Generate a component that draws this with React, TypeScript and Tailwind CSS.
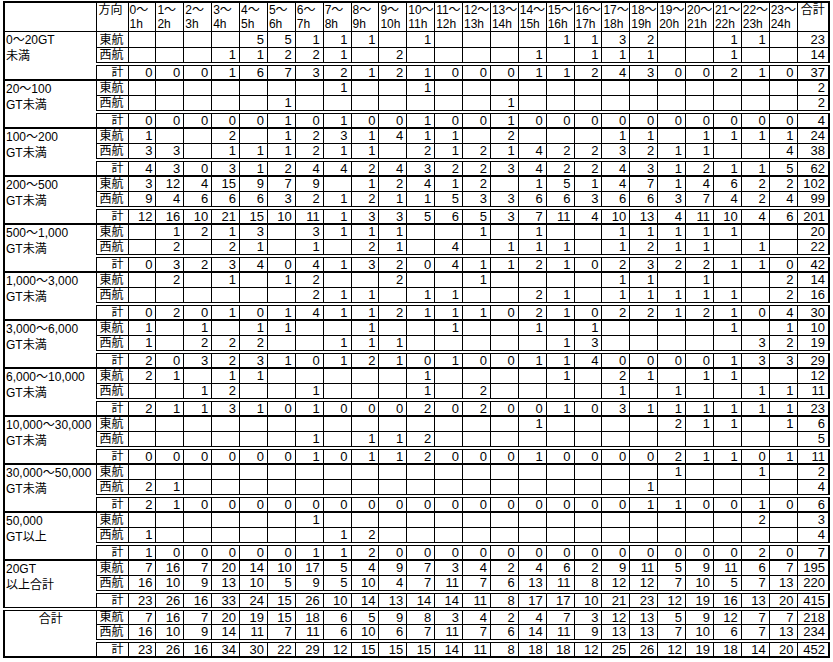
import React from "react";

// Hourly vessel traffic by tonnage class — "_" marks an empty cell, last value is the row total
type Group = {
  label: [string, string];
  center?: boolean;
  east: string;
  west: string;
  total: string;
};

const GROUPS: Group[] = [
  {
    label: ["0～20GT", "未満"],
    east:  "_ _ _ _ 5 5 1 1 1 _ 1 _ _ _ _ 1 1 3 2 _ _ 1 1 _ 23",
    west:  "_ _ _ 1 1 2 2 1 _ 2 _ _ _ _ 1 _ 1 1 1 _ _ 1 _ _ 14",
    total: "0 0 0 1 6 7 3 2 1 2 1 0 0 0 1 1 2 4 3 0 0 2 1 0 37",
  },
  {
    label: ["20～100", "GT未満"],
    east:  "_ _ _ _ _ _ _ 1 _ _ 1 _ _ _ _ _ _ _ _ _ _ _ _ _ 2",
    west:  "_ _ _ _ _ 1 _ _ _ _ _ _ _ 1 _ _ _ _ _ _ _ _ _ _ 2",
    total: "0 0 0 0 0 1 0 1 0 0 1 0 0 1 0 0 0 0 0 0 0 0 0 0 4",
  },
  {
    label: ["100～200", "GT未満"],
    east:  "1 _ _ 2 _ 1 2 3 1 4 1 1 _ 2 _ _ _ 1 1 _ 1 1 1 1 24",
    west:  "3 3 _ 1 1 1 2 1 1 _ 2 1 2 1 4 2 2 3 2 1 1 _ _ 4 38",
    total: "4 3 0 3 1 2 4 4 2 4 3 2 2 3 4 2 2 4 3 1 2 1 1 5 62",
  },
  {
    label: ["200～500", "GT未満"],
    east:  "3 12 4 15 9 7 9 _ 1 2 4 1 2 _ 1 5 1 4 7 1 4 6 2 2 102",
    west:  "9 4 6 6 6 3 2 1 2 1 1 5 3 3 6 6 3 6 6 3 7 4 2 4 99",
    total: "12 16 10 21 15 10 11 1 3 3 5 6 5 3 7 11 4 10 13 4 11 10 4 6 201",
  },
  {
    label: ["500～1,000", "GT未満"],
    east:  "_ 1 2 1 3 _ 3 1 1 1 _ _ 1 _ 1 _ _ 1 1 1 1 1 _ _ 20",
    west:  "_ 2 _ 2 1 _ 1 _ 2 1 _ 4 _ 1 1 1 _ 1 2 1 1 _ 1 _ 22",
    total: "0 3 2 3 4 0 4 1 3 2 0 4 1 1 2 1 0 2 3 2 2 1 1 0 42",
  },
  {
    label: ["1,000～3,000", "GT未満"],
    east:  "_ 2 _ 1 _ 1 2 _ _ 2 _ _ 1 _ _ _ _ 1 1 _ 1 _ _ 2 14",
    west:  "_ _ _ _ _ _ 2 1 1 _ 1 1 _ _ 2 1 _ 1 1 1 1 1 _ 2 16",
    total: "0 2 0 1 0 1 4 1 1 2 1 1 1 0 2 1 0 2 2 1 2 1 0 4 30",
  },
  {
    label: ["3,000～6,000", "GT未満"],
    east:  "1 _ 1 _ 1 1 _ _ 1 _ _ 1 _ _ 1 _ 1 _ _ _ _ 1 _ 1 10",
    west:  "1 _ 2 2 2 _ _ 1 1 1 _ _ _ _ _ 1 3 _ _ _ _ _ 3 2 19",
    total: "2 0 3 2 3 1 0 1 2 1 0 1 0 0 1 1 4 0 0 0 0 1 3 3 29",
  },
  {
    label: ["6,000～10,000", "GT未満"],
    east:  "2 1 _ 1 1 _ _ _ _ _ 1 _ _ _ _ 1 _ 2 1 _ 1 1 _ _ 12",
    west:  "_ _ 1 2 _ _ 1 _ _ _ 1 _ 2 _ _ _ _ 1 _ 1 _ _ 1 1 11",
    total: "2 1 1 3 1 0 1 0 0 0 2 0 2 0 0 1 0 3 1 1 1 1 1 1 23",
  },
  {
    label: ["10,000～30,000", "GT未満"],
    east:  "_ _ _ _ _ _ _ _ _ _ _ _ _ _ 1 _ _ _ _ 2 1 1 _ 1 6",
    west:  "_ _ _ _ _ _ 1 _ 1 1 2 _ _ _ _ _ _ _ _ _ _ _ _ _ 5",
    total: "0 0 0 0 0 0 1 0 1 1 2 0 0 0 1 0 0 0 0 2 1 1 0 1 11",
  },
  {
    label: ["30,000～50,000", "GT未満"],
    east:  "_ _ _ _ _ _ _ _ _ _ _ _ _ _ _ _ _ _ _ 1 _ _ 1 _ 2",
    west:  "2 1 _ _ _ _ _ _ _ _ _ _ _ _ _ _ _ _ 1 _ _ _ _ _ 4",
    total: "2 1 0 0 0 0 0 0 0 0 0 0 0 0 0 0 0 0 1 1 0 0 1 0 6",
  },
  {
    label: ["50,000", "GT以上"],
    east:  "_ _ _ _ _ _ 1 _ _ _ _ _ _ _ _ _ _ _ _ _ _ _ 2 _ 3",
    west:  "1 _ _ _ _ _ _ 1 2 _ _ _ _ _ _ _ _ _ _ _ _ _ _ _ 4",
    total: "1 0 0 0 0 0 1 1 2 0 0 0 0 0 0 0 0 0 0 0 0 0 2 0 7",
  },
  {
    label: ["20GT", "以上合計"],
    east:  "7 16 7 20 14 10 17 5 4 9 7 3 4 2 4 6 2 9 11 5 9 11 6 7 195",
    west:  "16 10 9 13 10 5 9 5 10 4 7 11 7 6 13 11 8 12 12 7 10 5 7 13 220",
    total: "23 26 16 33 24 15 26 10 14 13 14 14 11 8 17 17 10 21 23 12 19 16 13 20 415",
  },
  {
    label: ["合計", ""],
    center: true,
    east:  "7 16 7 20 19 15 18 6 5 9 8 3 4 2 4 7 3 12 13 5 9 12 7 7 218",
    west:  "16 10 9 14 11 7 11 6 10 6 7 11 7 6 14 11 9 13 13 7 10 6 7 13 234",
    total: "23 26 16 34 30 22 29 12 15 15 15 14 11 8 18 18 12 25 26 12 19 18 14 20 452",
  },
];

const HOURS = Array.from({ length: 24 }, (_, i) => i);

const parse = (s: string) => s.split(" ").map((v) => (v === "_" ? "" : v));

// ── Cell classes ─────────────────────────────────────────────────────────────

const CELL = "border border-black p-0 h-4";
const NUM = "text-right pr-[3px] align-middle text-[13px] leading-none";
const DOUBLE_TOP = "[border-top:4px_double_#000]!";
const THICK_TOP = "[border-top:2px_solid_#000]!";

function GroupRows({ g, first }: { g: Group; first: boolean }) {
  // The grand total block is set off with a double rule instead of a thick one
  const groupTop = g.center ? DOUBLE_TOP : first ? "" : THICK_TOP;
  const rows: { dir: string; vals: string[]; sum: boolean }[] = [
    { dir: "東航", vals: parse(g.east), sum: false },
    { dir: "西航", vals: parse(g.west), sum: false },
    { dir: "\u3000計", vals: parse(g.total), sum: true },
  ];

  return (
    <>
      {rows.map((r, ri) => {
        const top = ri === 0 ? groupTop : r.sum ? DOUBLE_TOP : "";
        return (
          <tr key={r.dir} className="h-4">
            {ri === 0 && (
              <td
                rowSpan={3}
                className={`${CELL} ${groupTop} align-top text-[12px] leading-[16px] pl-[1px] ${
                  g.center ? "text-center" : "text-left"
                }`}
              >
                <div className="h-4">{g.label[0]}</div>
                <div className="h-4">{g.label[1]}</div>
              </td>
            )}
            <td className={`${CELL} ${top} text-left pl-[3px] align-middle text-[12px] leading-none`}>
              {r.dir}
            </td>
            {r.vals.map((v, i) => (
              <td key={i} className={`${CELL} ${top} ${NUM}`}>
                {v}
              </td>
            ))}
          </tr>
        );
      })}
    </>
  );
}

export default function App() {
  return (
    <div className="w-[833px] h-[662px] bg-white pl-[3px] pt-[1px] text-black font-['Liberation_Sans','Noto_Sans_CJK_JP',sans-serif]">
      <table className="table-fixed border-collapse border-2 border-black w-[827px]">
        <colgroup>
          <col className="w-[92px]" />
          <col className="w-[32px]" />
          {HOURS.map((h) => (
            <col key={h} />
          ))}
          <col className="w-[32px]" />
        </colgroup>
        <tbody>
          {/* ── Header ── */}
          <tr className="h-[29px]">
            <td className={`${CELL} h-[29px]`} />
            <td className={`${CELL} align-top text-left pl-[2px] text-[12px] leading-[15px]`}>方向</td>
            {HOURS.map((h) => (
              <td
                key={h}
                className={`${CELL} align-top text-left pl-[1px] text-[12px] leading-[14px] whitespace-nowrap`}
              >
                <div className="h-[14px]">{h}～</div>
                <div className="h-[14px]">{h + 1}h</div>
              </td>
            ))}
            <td className={`${CELL} align-top text-center text-[12px] leading-[15px]`}>合計</td>
          </tr>

          {/* ── Tonnage groups ── */}
          {GROUPS.map((g, gi) => (
            <GroupRows key={gi} g={g} first={gi === 0} />
          ))}
        </tbody>
      </table>
    </div>
  );
}
